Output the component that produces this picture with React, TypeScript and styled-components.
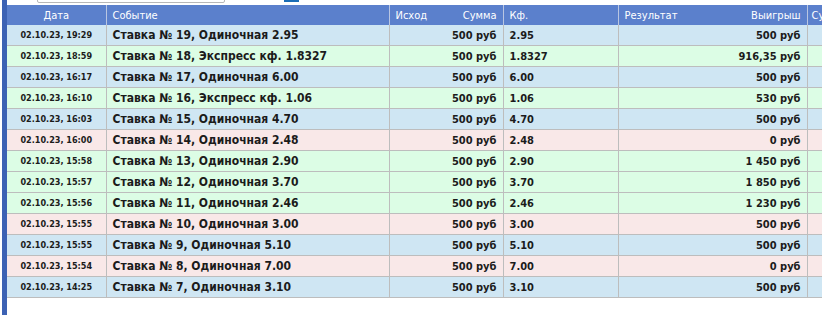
import React from 'react';
import styled, { createGlobalStyle } from 'styled-components';

type Tone = 'blue' | 'green' | 'pink';

interface iBet {
	date: string;
	event: string;
	sum: string;
	kf: string;
	win: string;
	tone: Tone;
}

const bets: iBet[] = [
	{ date: '02.10.23, 19:29', event: 'Ставка № 19, Одиночная 2.95', sum: '500 руб', kf: '2.95', win: '500 руб', tone: 'blue' },
	{ date: '02.10.23, 18:59', event: 'Ставка № 18, Экспресс кф. 1.8327', sum: '500 руб', kf: '1.8327', win: '916,35 руб', tone: 'green' },
	{ date: '02.10.23, 16:17', event: 'Ставка № 17, Одиночная 6.00', sum: '500 руб', kf: '6.00', win: '500 руб', tone: 'blue' },
	{ date: '02.10.23, 16:10', event: 'Ставка № 16, Экспресс кф. 1.06', sum: '500 руб', kf: '1.06', win: '530 руб', tone: 'green' },
	{ date: '02.10.23, 16:03', event: 'Ставка № 15, Одиночная 4.70', sum: '500 руб', kf: '4.70', win: '500 руб', tone: 'blue' },
	{ date: '02.10.23, 16:00', event: 'Ставка № 14, Одиночная 2.48', sum: '500 руб', kf: '2.48', win: '0 руб', tone: 'pink' },
	{ date: '02.10.23, 15:58', event: 'Ставка № 13, Одиночная 2.90', sum: '500 руб', kf: '2.90', win: '1 450 руб', tone: 'green' },
	{ date: '02.10.23, 15:57', event: 'Ставка № 12, Одиночная 3.70', sum: '500 руб', kf: '3.70', win: '1 850 руб', tone: 'green' },
	{ date: '02.10.23, 15:56', event: 'Ставка № 11, Одиночная 2.46', sum: '500 руб', kf: '2.46', win: '1 230 руб', tone: 'green' },
	{ date: '02.10.23, 15:55', event: 'Ставка № 10, Одиночная 3.00', sum: '500 руб', kf: '3.00', win: '500 руб', tone: 'pink' },
	{ date: '02.10.23, 15:55', event: 'Ставка № 9, Одиночная 5.10', sum: '500 руб', kf: '5.10', win: '500 руб', tone: 'blue' },
	{ date: '02.10.23, 15:54', event: 'Ставка № 8, Одиночная 7.00', sum: '500 руб', kf: '7.00', win: '0 руб', tone: 'pink' },
	{ date: '02.10.23, 14:25', event: 'Ставка № 7, Одиночная 3.10', sum: '500 руб', kf: '3.10', win: '500 руб', tone: 'blue' },
];

const toneBg: Record<Tone, string> = {
	blue: '#cfe6f3',
	green: '#dcfde5',
	pink: '#f9e8e8',
};

const App = () => {
	return (
		<>
			<GlobalStyle />
			<StyledPage>
				<SideBar />
				<StyledMain>
					<TopStrip>
						<SearchBox />
						<TopButton />
					</TopStrip>
					<BetTable>
						<colgroup>
							<col style={{ width: 99 }} />
							<col style={{ width: 283 }} />
							<col style={{ width: 51 }} />
							<col style={{ width: 63 }} />
							<col style={{ width: 115 }} />
							<col style={{ width: 82 }} />
							<col style={{ width: 107 }} />
							<col style={{ width: 60 }} />
						</colgroup>
						<thead>
							<tr>
								<Th $align='center'>Дата</Th>
								<Th>Событие</Th>
								<Th $joined>Исход</Th>
								<Th $align='right'>Сумма</Th>
								<Th>Кф.</Th>
								<Th $joined>Результат</Th>
								<Th $align='right'>Выигрыш</Th>
								<Th $tight>Сумма</Th>
							</tr>
						</thead>
						<tbody>
							{bets.map((bet, i) => (
								<Row key={i} $tone={bet.tone}>
									<DateCell>{bet.date}</DateCell>
									<EventCell>{bet.event}</EventCell>
									<Td $joined />
									<Td $align='right'>{bet.sum}</Td>
									<Td>{bet.kf}</Td>
									<Td $joined />
									<Td $align='right'>{bet.win}</Td>
									<Td />
								</Row>
							))}
						</tbody>
					</BetTable>
				</StyledMain>
			</StyledPage>
		</>
	);
};

const GlobalStyle = createGlobalStyle`
	html, body {
		margin: 0;
		padding: 0;
		background: #fff;
		overflow: hidden;
	}
	body {
		font-family: 'DejaVu Sans Condensed', 'DejaVu Sans', sans-serif;
		color: #1b1b1b;
	}
`;

const StyledPage = styled.div`
	display: flex;
	width: 822px;
	height: 315px;
	overflow: hidden;
`;

const SideBar = styled.div`
	flex: 0 0 5px;
	margin-left: 2px;
	background: #3c62b4;
`;

const StyledMain = styled.div`
	flex: 1 0 auto;
	display: flex;
	flex-direction: column;
	min-width: 0;
`;

const TopStrip = styled.div`
	height: 5px;
	display: flex;
	align-items: flex-end;
	overflow: hidden;
`;

const SearchBox = styled.div`
	margin-left: 30px;
	width: 188px;
	height: 20px;
	border: 1px solid #b8b8b8;
	margin-bottom: 2px;
	flex: 0 0 auto;
	box-sizing: border-box;
	border-radius: 2px;
	background: #fff;
`;

const TopButton = styled.div`
	margin-left: 59px;
	width: 15px;
	height: 20px;
	margin-bottom: 3px;
	background: #1b6db6;
	flex: 0 0 auto;
`;

const BetTable = styled.table`
	table-layout: fixed;
	border-collapse: collapse;
	width: 860px;
	font-size: 11px;
`;

const Th = styled.th<{ $align?: 'left' | 'center' | 'right'; $joined?: boolean; $tight?: boolean }>`
	height: 20px;
	padding: 0 ${({ $tight }) => ($tight ? '4px' : '6px')};
	background: #5b80cc;
	color: #fff;
	font-weight: normal;
	font-size: 11px;
	text-align: ${({ $align }) => $align || 'left'};
	white-space: nowrap;
	overflow: hidden;
	border-right: ${({ $joined }) => ($joined ? 'none' : '1px solid #b9c6e2')};
`;

const Row = styled.tr<{ $tone: Tone }>`
	background: ${({ $tone }) => toneBg[$tone]};
	border-bottom: 1px solid #bdbdbd;
`;

const Td = styled.td<{ $align?: 'left' | 'right'; $joined?: boolean }>`
	height: 20px;
	padding: 0 6px;
	font-weight: bold;
	font-size: 11px;
	text-align: ${({ $align }) => $align || 'left'};
	white-space: nowrap;
	overflow: hidden;
	border-right: ${({ $joined }) => ($joined ? 'none' : '1px solid #bdbdbd')};
`;

const DateCell = styled(Td)`
	font-size: 9px;
	text-align: center;
`;

const EventCell = styled(Td)`
	font-size: 12px;
`;

export default App;
